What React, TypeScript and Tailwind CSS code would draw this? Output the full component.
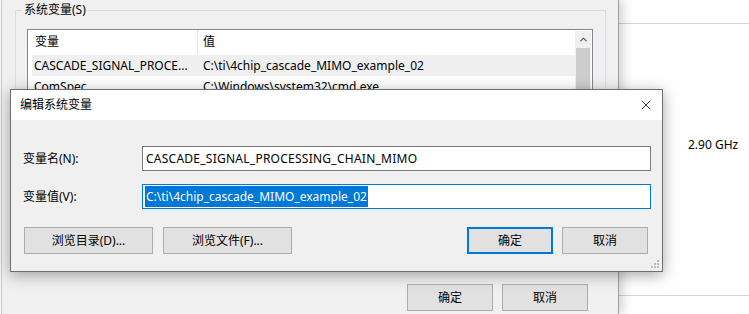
import { X, ChevronUp } from 'lucide-react'

const font = { fontFamily: '"Noto Sans", "Noto Sans CJK SC", sans-serif' }

function WinButton({ label, w, primary }: { label: string; w: string; primary?: boolean }) {
  return (
    <div
      className={`${w} h-[27px] flex items-center justify-center bg-[#e1e1e1] text-[12px] text-black ${
        primary ? 'border-2 border-[#0078d7]' : 'border border-[#adadad]'
      }`}
    >
      {label}
    </div>
  )
}

function SystemProperties() {
  return (
    <div className="w-[618px] h-full bg-[#f0f0f0] border-l border-[#c8c8c8] ml-[1px] border-r border-r-[#a0a0a0] flex flex-col shadow-[4px_0_10px_rgba(0,0,0,0.18)] relative z-10">
      {/* system variables group */}
      <div className="relative mt-[10px] ml-[13px] w-[591px] h-[262px] border border-[#dcdcdc]">
        <span className="absolute -top-[9px] left-[6px] px-[2px] bg-[#f0f0f0] text-[12px] leading-[16px] text-black">
          系统变量(S)
        </span>
        <div className="mt-[18px] ml-[11px] w-[566px] h-[230px] border border-[#828790] bg-white flex">
          <div className="flex-1 flex flex-col pl-[4px]">
            <div className="h-[24px] flex text-[12px] text-black">
              <div className="w-[166px] pl-[3px] flex items-center border-r border-[#e5e5e5]">变量</div>
              <div className="pl-[5px] flex items-center">值</div>
            </div>
            <div className="h-[21px] mt-[1px] flex text-[12px] text-black bg-[#efefef]">
              <div className="w-[166px] pl-[2px] flex items-center whitespace-nowrap overflow-hidden">CASCADE_SIGNAL_PROCE...</div>
              <div className="pl-[5px] flex items-center whitespace-nowrap">C:\ti\4chip_cascade_MIMO_example_02</div>
            </div>
            <div className="h-[21px] flex text-[12px] text-black">
              <div className="w-[166px] pl-[2px] flex items-center">ComSpec</div>
              <div className="pl-[5px] flex items-center whitespace-nowrap">C:\Windows\system32\cmd.exe</div>
            </div>
          </div>
          <div className="w-[16px] mr-[1px] mt-[1px] flex flex-col bg-[#f0f0f0]">
            <div className="h-[17px] flex items-center justify-center">
              <ChevronUp size={11} strokeWidth={3} className="text-[#606060]" />
            </div>
            <div className="mx-[1px] flex-1 bg-[#cdcdcd]" />
          </div>
        </div>
      </div>
      <div className="flex justify-end gap-[9px] mt-[12px] pr-[30px]">
        <WinButton label="确定" w="w-[86px]" />
        <WinButton label="取消" w="w-[86px]" />
      </div>
    </div>
  )
}

function EditDialog() {
  return (
    <div className="absolute left-[10px] top-[89px] w-[653px] h-[183px] border border-[#6e6e6e] bg-[#f0f0f0] shadow-[0_3px_14px_rgba(0,0,0,0.35)] z-20 flex flex-col">
      <div className="h-[30px] bg-white flex items-center justify-between pl-[9px] pr-[8px]">
        <span className="text-[12px] text-black">编辑系统变量</span>
        <X size={16} strokeWidth={1.2} className="text-black" />
      </div>
      <div className="flex-1 flex flex-col pt-[26px] pl-[12px] relative">
        <div className="flex items-center h-[25px]">
          <span className="w-[119px] shrink-0 text-[12px] text-black">变量名(N):</span>
          <div className="w-[509px] h-[25px] border border-[#7a7a7a] bg-white flex items-center pl-[3px] text-[12px] tracking-[0.25px] text-black">
            CASCADE_SIGNAL_PROCESSING_CHAIN_MIMO
          </div>
        </div>
        <div className="flex items-center h-[25px] mt-[13px]">
          <span className="w-[119px] shrink-0 text-[12px] text-black">变量值(V):</span>
          <div className="w-[509px] h-[25px] border border-[#0078d7] bg-white flex items-center pl-[2px] text-[12px]">
            <span className="bg-[#0078d7] text-white px-[1px] leading-[21px]">C:\ti\4chip_cascade_MIMO_example_02</span>
          </div>
        </div>
        <div className="flex mt-[18px] pl-[1px] pr-[14px]">
          <WinButton label="浏览目录(D)..." w="w-[129px]" />
          <div className="ml-[10px]">
            <WinButton label="浏览文件(F)..." w="w-[129px]" />
          </div>
          <div className="ml-auto flex gap-[9px]">
            <WinButton label="确定" w="w-[86px]" primary />
            <WinButton label="取消" w="w-[86px]" />
          </div>
        </div>
        <svg className="absolute right-[3px] bottom-[3px]" width="8" height="8" viewBox="0 0 8 8">
          <rect x="6" y="0" width="2" height="2" fill="#bcbcbc" />
          <rect x="3" y="3" width="2" height="2" fill="#bcbcbc" />
          <rect x="6" y="3" width="2" height="2" fill="#bcbcbc" />
          <rect x="0" y="6" width="2" height="2" fill="#bcbcbc" />
          <rect x="3" y="6" width="2" height="2" fill="#bcbcbc" />
          <rect x="6" y="6" width="2" height="2" fill="#bcbcbc" />
        </svg>
      </div>
    </div>
  )
}

export default function App() {
  return (
    <div className="relative w-[749px] h-[314px] overflow-hidden bg-white flex" style={font}>
      <SystemProperties />
      <div className="flex-1 flex flex-col">
        <div className="h-[24px] border-b border-[#d4d4d4]" />
        <div className="flex-1 pt-[112px] pl-[69px] text-[12px] text-black">2.90 GHz</div>
        <div className="h-[19px] border-t border-[#d4d4d4]" />
      </div>
      <EditDialog />
    </div>
  )
}
